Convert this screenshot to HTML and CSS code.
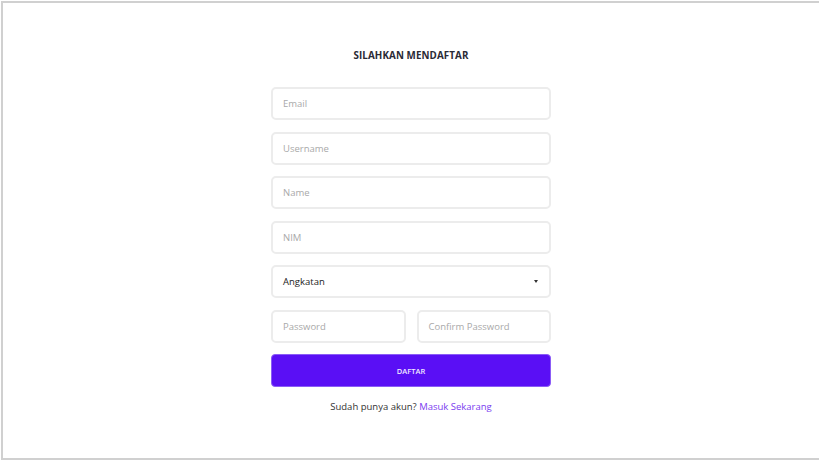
FILE: index.html
```html
<!DOCTYPE html>
<html>
<head>
<meta charset="utf-8">
<link rel="stylesheet" href="styles.css">
</head>
<body>
<div class="frame">
  <div class="form">
    <h1 class="title">SILAHKAN MENDAFTAR</h1>
    <div class="fields">
      <div class="field"><span class="ph">Email</span></div>
      <div class="field"><span class="ph">Username</span></div>
      <div class="field"><span class="ph">Name</span></div>
      <div class="field"><span class="ph">NIM</span></div>
      <div class="field select"><span class="val">Angkatan</span><span class="caret"></span></div>
      <div class="row">
        <div class="field half"><span class="ph">Password</span></div>
        <div class="field half"><span class="ph">Confirm Password</span></div>
      </div>
      <div class="btn">DAFTAR</div>
    </div>
    <p class="foot">Sudah punya akun? <a class="link">Masuk Sekarang</a></p>
  </div>
</div>
</body>
</html>
```
FILE: styles.css
```css
html, body { margin: 0; padding: 0; overflow: hidden; background: #fff; }
body { font-family: "Open Sans", "Liberation Sans", sans-serif; }
.frame {
  box-sizing: border-box;
  margin: 1px 0 0 1px;
  width: 830px;
  height: 459px;
  border: 2px solid #d0d0d0;
  display: flex;
  justify-content: center;
}
.form {
  width: 280px;
  margin-left: -10px;
  padding-top: 46px;
  display: flex;
  flex-direction: column;
}
.title {
  margin: 0 0 24px;
  text-align: center;
  font-size: 9.8px;
  line-height: 14px;
  font-weight: 700;
  color: #2a2a35;
  letter-spacing: 0.1px;
}
.fields { display: flex; flex-direction: column; gap: 11.5px; }
.field {
  box-sizing: border-box;
  height: 33px;
  flex: none;
  border: 2px solid #ececec;
  border-radius: 5px;
  display: flex;
  align-items: center;
  padding: 0 10px;
  font-size: 9.5px;
}
.half { flex: 1; }
.ph { color: #a9a9a9; }
.val { color: #222; }
.select { justify-content: space-between; padding-right: 11px; }
.caret {
  width: 0; height: 0;
  border-left: 2.5px solid transparent;
  border-right: 2.5px solid transparent;
  border-top: 3px solid #333;
}
.row { display: flex; gap: 11px; }
.btn {
  box-sizing: border-box;
  height: 33px;
  border: 1.5px solid #8b5cf6;
  border-radius: 4px;
  background: #5a0ff5;
  color: #f0eaff;
  font-size: 7.5px;
  font-weight: 600;
  display: flex;
  align-items: center;
  justify-content: center;
}
.foot {
  margin: 13px 0 0;
  text-align: center;
  font-size: 9.5px;
  line-height: 14px;
  color: #333;
}
.link { color: #7a3df0; }
```
